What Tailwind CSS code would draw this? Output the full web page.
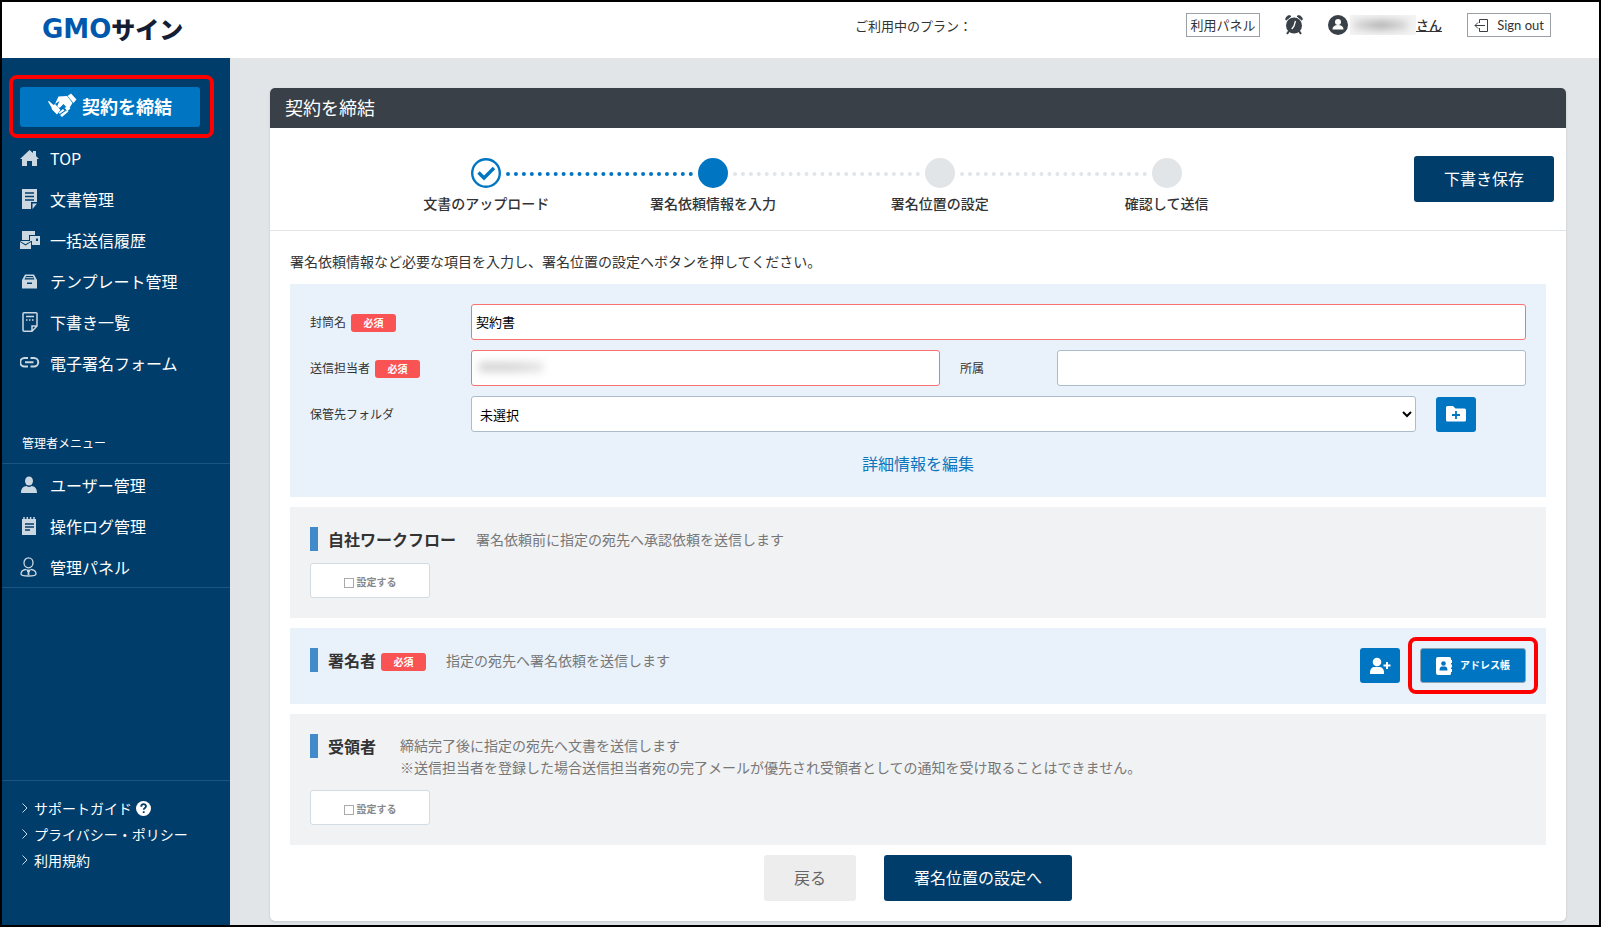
<!DOCTYPE html>
<html lang="ja">
<head>
  <meta charset="UTF-8" />
  <meta name="viewport" content="width=device-width, initial-scale=1.0" />
  <title>契約を締結 | GMOサイン</title>
  <script src="https://cdn.jsdelivr.net/npm/@tailwindcss/browser@4"></script>
</head>
<body class="flex min-h-screen flex-col border-2 border-black bg-[#e1e5e8] font-['Noto_Sans_CJK_JP',sans-serif] text-sm text-[#333]">

  <!-- Header -->
  <header class="flex h-14 shrink-0 items-center bg-white pb-[10px] pl-10 pr-12 text-[13px]">
    <a href="#" class="mt-2 flex items-center leading-6 font-bold">
      <span class="font-['DejaVu_Sans',sans-serif] text-[26px] text-[#0058ad]">GMO</span><span class="text-[24px] font-black text-[#141d33]">サイン</span>
    </a>
    <p class="mr-[214px] ml-auto mt-0.5 whitespace-nowrap">ご利用中のプラン：</p>
    <div class="flex items-center gap-[25px]">
      <button type="button" class="h-6 w-[74px] border border-[#9aa0a6] bg-white leading-5">利用パネル</button>
      <button type="button" aria-label="通知">
        <svg class="h-5 w-[18px]" viewBox="0 0 18 20" fill="#394047">
          <path d="M1 5.200A3.400 3.400 0 0 1 6 1.200zM17 5.200A3.400 3.400 0 0 0 12 1.200z" stroke="#394047" stroke-linejoin="round" />
          <circle cx="9" cy="10.500" r="8" />
          <path d="M4 16l-2 3M14 16l2 3" stroke="#394047" stroke-width="2" />
          <path d="M10.500 6L9 11l-2.200 3" stroke="#fff" stroke-width="1.300" fill="none" />
        </svg>
      </button>
      <a href="#" class="flex items-center">
        <svg class="h-5 w-5" viewBox="0 0 20 20">
          <circle cx="10" cy="10" r="10" fill="#394047" />
          <circle cx="10" cy="7" r="3" fill="#fff" />
          <path d="M4.500 14.500c0-3 2-4.500 5.500-4.500s5.500 1.500 5.500 4.500z" fill="#fff" />
        </svg>
        <span class="ml-0.5 flex h-5 w-[66px] items-center overflow-hidden bg-[#f4f4f4]">
          <span class="ml-1 h-2 w-[54px] bg-linear-to-r from-neutral-300 via-neutral-400 to-neutral-300 blur-xs"></span>
        </span>
        <span class="font-medium underline">さん</span>
      </a>
      <button type="button" class="flex h-6 w-[84px] items-center justify-between border border-[#9aa0a6] bg-white pl-1.5 pr-[6px] font-['Lato',sans-serif]">
        <svg class="h-[13px] w-[15px]" viewBox="0 0 15 13" fill="none" stroke="#394047">
          <path d="M5.500 4V.500h8v12h-8V9" />
          <path d="M11 6.500H1M4 3.500l-3 3 3 3" />
        </svg>
        <span>Sign out</span>
      </button>
    </div>
  </header>

  <div class="flex flex-1">
    <!-- Sidebar -->
    <aside class="w-[228px] shrink-0 bg-[#003d6a] pt-[29px] text-base text-white">
      <div class="relative ml-[18px] mr-[30px]">
        <button type="button" class="flex h-10 w-full items-center justify-center gap-1 rounded-[3px] bg-[#0075c2] pb-0.5 text-lg font-bold">
          <svg class="h-[26px] w-[30px]" viewBox="0 0 30 26" fill="#fff">
            <path d="M0 8.500l1-.5 4.500 4 1.500-1 5.500 6-3.500 4.500-5-5-.5-2z" />
            <path d="M7 11l3.500-7.500L19 3l5.500 7-4 6.500-5-5.500-3.500 3.500c-1.500 1-3-.5-2.500-2l2-4.500z" />
            <path d="M19.500 3L23 .5 28.500 6.500 25.500 10z" />
            <path d="M12 22l7-5 1.500 1.500-6.500 5.500zM11 19.500l4-3.500 1.500 1.500-5 3.500zM20 13l2.500 2.500-3 2.500-3-3z" />
          </svg>
          契約を締結
        </button>
        <div class="pointer-events-none absolute -top-3 -right-3.5 -bottom-[11px] -left-[11px] rounded-lg border-4 border-[#fe0000]"></div>
      </div>

      <nav class="mt-[10px]">
        <a href="#" class="flex h-[41px] items-center gap-[10px] pl-[18px]">
          <svg class="h-5 w-5" viewBox="0 0 20 20" fill="#ccd8e1"><path d="M0 11L9.500 2l3.500 3V3h3v5l3 3h-2v7h-5v-5H7v5H2v-7z" /></svg>TOP
        </a>
        <a href="#" class="flex h-[41px] items-center gap-[10px] pl-[18px]">
          <svg class="h-5 w-5" viewBox="0 0 20 20" fill="#ccd8e1"><path d="M2 0h15v13h-6v7H2zM12.500 14.500H17L12.500 20z" /><path d="M5 4h9M5 7.500h9M5 11h9" stroke="#003d6a" stroke-width="1.500" /></svg>文書管理
        </a>
        <a href="#" class="flex h-[41px] items-center gap-[10px] pl-[18px]">
          <svg class="h-5 w-5" viewBox="0 0 20 20" fill="#ccd8e1"><path d="M2 1h13v4H9v5H2z" /><path d="M10 6h10v9h-8v-4h-2z" /><path d="M0 12l5.500 3.500L11 12v7H0z" /><path d="M0 11h11l-5.500 3.300z" /><path d="M16 8.500h2V11h-2z" fill="#003d6a" /></svg>一括送信履歴
        </a>
        <a href="#" class="flex h-[41px] items-center gap-[10px] pl-[18px]">
          <svg class="h-5 w-5" viewBox="0 0 20 20" fill="#ccd8e1"><path d="M2 9l3-5.500h9L17 9v8.500H2z" /><path d="M4.500 8.500L6 5h7l1.500 3.500zM7 11.500h5V13H7z" fill="#003d6a" /><path d="M5.500 6.700h8" stroke="#ccd8e1" /></svg>テンプレート管理
        </a>
        <a href="#" class="flex h-[41px] items-center gap-[10px] pl-[18px]">
          <svg class="h-5 w-5" viewBox="0 0 20 20" fill="none" stroke="#ccd8e1" stroke-width="1.500"><path d="M4 .800h12a1 1 0 0 1 1 1V14l-5 5.200H4a1 1 0 0 1-1-1V1.800a1 1 0 0 1 1-1zM17 14h-5v5" /><path d="M6 4.500h8" /><path d="M6 8h8" stroke-dasharray="1.500 1.500" /></svg>下書き一覧
        </a>
        <a href="#" class="flex h-[41px] items-center gap-[10px] pl-[18px]">
          <svg class="h-5 w-5" viewBox="0 0 20 20" fill="none" stroke="#ccd8e1" stroke-width="2"><path d="M8 5H4.500a4 4 0 0 0 0 8.500H8M10.500 5H14a4 4 0 0 1 0 8.500h-3.500M5 9.200h8.500" /></svg>電子署名フォーム
        </a>
      </nav>

      <h2 class="mt-[50px] border-b border-[#1a5483] pb-[10px] pl-5 text-xs leading-5">管理者メニュー</h2>
      <nav class="border-b border-[#1a5483]">
        <a href="#" class="flex h-[41px] items-center gap-[10px] pl-[18px]">
          <svg class="h-5 w-5" viewBox="0 0 20 20" fill="#ccd8e1"><ellipse cx="9" cy="6" rx="4" ry="4.500" /><path d="M1 18c0-5 2.500-6.500 5.500-7 1.500 1.200 3.500 1.200 5 0 3 .5 5.500 2 5.500 7z" /></svg>ユーザー管理
        </a>
        <a href="#" class="flex h-[41px] items-center gap-[10px] pl-[18px]">
          <svg class="h-5 w-5" viewBox="0 0 20 20" fill="#ccd8e1"><path d="M2 3h14v16H2z" /><path d="M4 1v3M7.300 1v3M10.600 1v3M14 1v3" stroke="#ccd8e1" stroke-width="1.500" /><path d="M5 8h9M5 11h9M5 14h5" stroke="#003d6a" stroke-width="1.500" /></svg>操作ログ管理
        </a>
        <a href="#" class="flex h-[41px] items-center gap-[10px] pl-[18px]">
          <svg class="h-5 w-5" viewBox="0 0 20 20" fill="none" stroke="#ccd8e1" stroke-width="1.300"><ellipse cx="8.500" cy="5.800" rx="4.500" ry="5" /><path d="M5.500 12.500c-3 .5-4.500 2-4.500 4.500 0 1.500 1.500 2 7.500 2s7.500-.5 7.500-2c0-2.500-1.500-4-4.500-4.500-2 .8-4 .8-6 0z" /><path d="M8.500 13.500v4.500M7 14h3" stroke-width="1.800" /></svg>管理パネル
        </a>
      </nav>

      <ul class="mt-48 border-t border-[#1a5483] pt-[14px] pl-5 text-sm">
        <li class="flex h-[26px] items-center gap-[6px]">
          <svg class="h-[10px] w-[6px]" viewBox="0 0 6 10" fill="none" stroke="#ccd8e1"><path d="M.5.5l4.500 4.500L.5 9.500" /></svg>
          <a href="#" class="flex items-center gap-1">サポートガイド
            <svg class="h-[15px] w-[15px]" viewBox="0 0 15 15"><circle cx="7.500" cy="7.500" r="7.500" fill="#fff" /><path d="M5.200 5.700c0-3.300 4.800-3.300 4.800-.4 0 1.700-2.300 1.700-2.300 3.500M7.700 10.200V12" stroke="#003d6a" stroke-width="1.800" fill="none" /></svg>
          </a>
        </li>
        <li class="flex h-[26px] items-center gap-[6px]">
          <svg class="h-[10px] w-[6px]" viewBox="0 0 6 10" fill="none" stroke="#ccd8e1"><path d="M.5.5l4.500 4.500L.5 9.500" /></svg>
          <a href="#">プライバシー・ポリシー</a>
        </li>
        <li class="flex h-[26px] items-center gap-[6px]">
          <svg class="h-[10px] w-[6px]" viewBox="0 0 6 10" fill="none" stroke="#ccd8e1"><path d="M.5.5l4.500 4.500L.5 9.500" /></svg>
          <a href="#">利用規約</a>
        </li>
      </ul>
    </aside>

    <!-- Main content -->
    <main class="mt-[30px] mr-[33px] mb-1 ml-10 flex-1 self-start rounded-[5px] bg-white shadow">
      <h1 class="flex h-10 items-center rounded-t-[5px] bg-[#394047] px-[15px] pb-0.5 text-lg text-white">契約を締結</h1>

      <!-- Steps -->
      <div class="flex items-center border-b border-[#e1e5e8] pr-3 pl-[103px]">
        <ol class="mr-[134px] grid flex-1 grid-cols-4 pt-[30px] pb-[17px] text-center leading-5 font-medium">
          <li class="relative flex flex-col items-center gap-[5px]">
            <svg class="h-[30px] w-[30px]" viewBox="0 0 30 30" fill="none" stroke="#0075c2"><circle cx="15" cy="15" r="13.800" stroke-width="2.400" /><path d="M7.500 14.500l5.500 5.500L23 10" stroke-width="3.400" /></svg>
            文書のアップロード
            <span class="absolute top-[14px] left-[calc(50%+20px)] w-[calc(100%-40px)] border-t-4 border-dotted border-[#0075c2]"></span>
          </li>
          <li class="relative flex flex-col items-center gap-[5px]">
            <span class="h-[30px] w-[30px] rounded-full bg-[#0075c2]"></span>
            署名依頼情報を入力
            <span class="absolute top-[14px] left-[calc(50%+20px)] w-[calc(100%-40px)] border-t-4 border-dotted border-[#e1e5e8]"></span>
          </li>
          <li class="relative flex flex-col items-center gap-[5px]">
            <span class="h-[30px] w-[30px] rounded-full bg-[#e1e5e8]"></span>
            署名位置の設定
            <span class="absolute top-[14px] left-[calc(50%+20px)] w-[calc(100%-40px)] border-t-4 border-dotted border-[#e1e5e8]"></span>
          </li>
          <li class="flex flex-col items-center gap-[5px]">
            <span class="h-[30px] w-[30px] rounded-full bg-[#e1e5e8]"></span>
            確認して送信
          </li>
        </ol>
        <button type="button" class="h-[46px] rounded-[3px] bg-[#003d6a] px-[30px] pb-0.5 text-base text-white">下書き保存</button>
      </div>

      <form class="px-5 pb-5">
        <p class="mt-5 mb-[13px] leading-5">署名依頼情報など必要な項目を入力し、署名位置の設定へボタンを押してください。</p>

        <!-- Envelope info -->
        <section class="space-y-[10px] bg-[#e9f2fa] px-5 pt-5 pb-[22px]">
          <div class="flex items-center">
            <label for="envelope-name" class="flex w-[161px] shrink-0 items-center gap-[5px] text-xs">封筒名
              <span class="mt-0.5 h-[18px] w-[45px] rounded-[3px] bg-[#f95353] text-center text-[10px] leading-[18px] font-bold text-white">必須</span>
            </label>
            <input id="envelope-name" type="text" value="契約書" class="h-9 min-w-0 flex-1 rounded-[3px] border border-[#fa7171] bg-white px-1 pb-0.5 text-[13px] text-black" />
          </div>
          <div class="flex items-center">
            <label for="sender" class="flex w-[161px] shrink-0 items-center gap-[5px] text-xs">送信担当者
              <span class="mt-0.5 h-[18px] w-[45px] rounded-[3px] bg-[#f95353] text-center text-[10px] leading-[18px] font-bold text-white">必須</span>
            </label>
            <div class="relative flex min-w-0 flex-1">
              <input id="sender" type="text" class="h-9 w-full rounded-[3px] border border-[#fa7171] bg-white px-1 text-[13px] text-black" />
              <span class="absolute top-3 left-2 h-2.5 w-16 bg-linear-to-r from-neutral-300 via-neutral-300 to-neutral-200 blur-xs"></span>
            </div>
            <label for="department" class="ml-5 w-[97px] shrink-0 text-xs">所属</label>
            <div class="flex min-w-0 flex-1">
              <input id="department" type="text" class="h-9 w-full rounded-[3px] border border-[#adbccb] bg-white px-1 text-[13px] text-black" />
            </div>
          </div>
          <div class="flex items-center">
            <label for="folder" class="w-[161px] shrink-0 text-xs">保管先フォルダ</label>
            <select id="folder" class="h-9 min-w-0 flex-1 rounded-[3px] border border-[#adbccb] bg-white px-1 text-[13px] text-black">
              <option>未選択</option>
            </select>
            <button type="button" aria-label="フォルダ追加" class="mr-[50px] ml-5 flex h-[35px] w-10 items-center justify-center rounded-[3px] bg-[#0075c2]">
              <svg class="h-4 w-5" viewBox="0 0 20 16"><path d="M1.500 0H7l2.500 2.500h9A1.500 1.500 0 0 1 20 4v10a1.500 1.500 0 0 1-1.500 1.500h-17A1.500 1.500 0 0 1 0 14V1.500A1.500 1.500 0 0 1 1.500 0z" fill="#fff" /><path d="M10 5v8M6 9h8" stroke="#0075c2" stroke-width="1.800" /></svg>
            </button>
          </div>
          <p class="mt-[19px] text-center"><a href="#" class="text-base text-[#0e76bd]">詳細情報を編集</a></p>
        </section>

        <!-- Own workflow -->
        <section class="mt-[10px] bg-[#f1f2f4] p-5">
          <div class="flex items-start">
            <h2 class="flex h-6 items-center border-l-8 border-[#428bca] pl-[10px] text-base font-bold">自社ワークフロー</h2>
            <p class="ml-5 leading-6 text-[#777]">署名依頼前に指定の宛先へ承認依頼を送信します</p>
          </div>
          <label class="mt-3 flex h-[35px] w-[120px] items-center justify-center gap-[3px] rounded-[3px] border border-[#d2dce4] bg-white pt-1 text-[10px] font-bold text-[#888]">
            <input type="checkbox" class="h-[10px] w-[10px] appearance-none border border-[#aaa] bg-white" />設定する
          </label>
        </section>

        <!-- Signers -->
        <section class="mt-[10px] flex items-start bg-[#e9f2fa] px-5 pt-5 pb-[21px]">
          <h2 class="flex h-6 items-center border-l-8 border-[#428bca] pl-[10px] text-base font-bold">署名者</h2>
          <span class="mt-[5px] ml-[5px] h-[18px] w-[45px] rounded-[3px] bg-[#f95353] text-center text-[10px] leading-[18px] font-bold text-white">必須</span>
          <p class="ml-5 leading-6 text-[#777]">指定の宛先へ署名依頼を送信します</p>
          <button type="button" aria-label="署名者を追加" class="ml-auto flex h-[35px] w-10 items-center justify-center rounded-[3px] bg-[#0075c2]">
            <svg class="h-[18px] w-[21px]" viewBox="0 0 21 18" fill="#fff"><circle cx="7" cy="5" r="4.300" /><path d="M0 17v-2c0-3 2-5 4.500-5h5c2.500 0 4.500 2 4.500 5v2z" /><path d="M17 5v7M13.500 8.500h7" stroke="#fff" stroke-width="2" /></svg>
          </button>
          <div class="relative ml-5">
            <button type="button" class="flex h-[35px] w-[106px] items-center justify-center gap-2 rounded-[3px] border border-[#8fa3b3] bg-[#0075c2] text-[10px] font-bold text-white">
              <svg class="h-[18px] w-4" viewBox="0 0 16 18" fill="#fff"><path d="M2 0h11.500A1.500 1.500 0 0 1 15 1.500v15a1.500 1.500 0 0 1-1.500 1.500H2a2 2 0 0 1-2-2V2a2 2 0 0 1 2-2zM14 3h2v3h-2zM14 7.500h2v3h-2zM14 12h2v3h-2z" /><circle cx="7.500" cy="6.500" r="2.300" fill="#0075c2" /><path d="M3.500 13.500c0-2.500 1-4 2.500-4h3c1.500 0 2.500 1.500 2.500 4z" fill="#0075c2" /></svg>
              アドレス帳
            </button>
            <div class="pointer-events-none absolute -inset-x-3 -inset-y-[11px] rounded-lg border-4 border-[#fe0000]"></div>
          </div>
        </section>

        <!-- Recipients -->
        <section class="mt-[10px] bg-[#f1f2f4] p-5">
          <div class="flex items-start">
            <h2 class="flex h-6 items-center border-l-8 border-[#428bca] pl-[10px] text-base font-bold">受領者</h2>
            <p class="ml-6 leading-[22px] text-[#777]">締結完了後に指定の宛先へ文書を送信します<br />※送信担当者を登録した場合送信担当者宛の完了メールが優先され受領者としての通知を受け取ることはできません。</p>
          </div>
          <label class="mt-3 flex h-[35px] w-[120px] items-center justify-center gap-[3px] rounded-[3px] border border-[#d2dce4] bg-white pt-1 text-[10px] font-bold text-[#888]">
            <input type="checkbox" class="h-[10px] w-[10px] appearance-none border border-[#aaa] bg-white" />設定する
          </label>
        </section>

        <div class="mt-[10px] flex justify-center gap-7 text-base">
          <button type="button" class="h-[46px] rounded-[3px] bg-[#ededed] px-[30px] pb-0.5 text-[#666]">戻る</button>
          <button type="submit" class="h-[46px] rounded-[3px] bg-[#003d6a] px-[30px] pb-0.5 text-white">署名位置の設定へ</button>
        </div>
      </form>
    </main>
  </div>
</body>
</html>
